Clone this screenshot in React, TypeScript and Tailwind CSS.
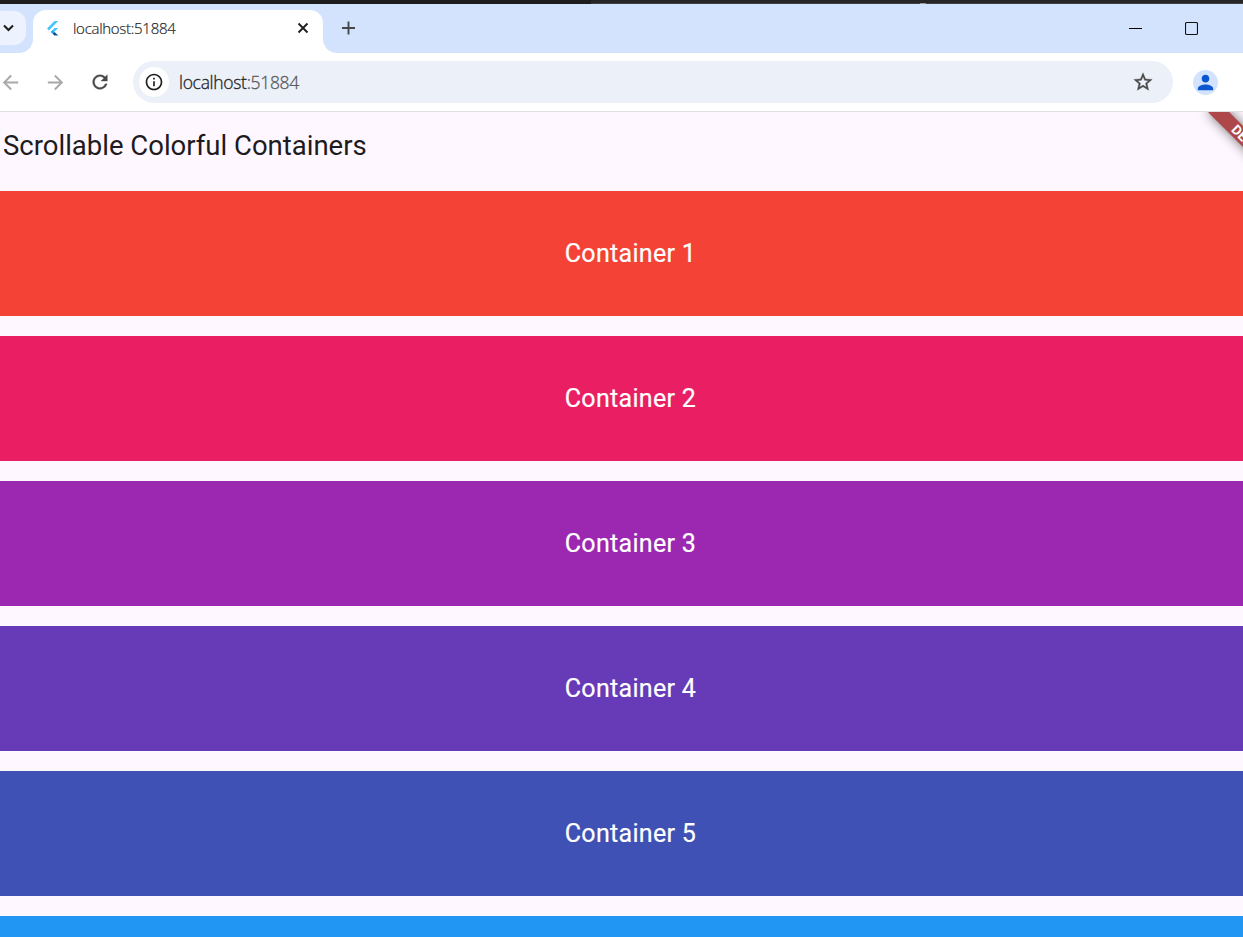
import React from "react";
import { MdArrowBack, MdArrowForward, MdInfoOutline, MdPerson } from "react-icons/md";

const containers = [
  { label: "Container 1", color: "bg-[#f44336]" },
  { label: "Container 2", color: "bg-[#e91e63]" },
  { label: "Container 3", color: "bg-[#9c27b0]" },
  { label: "Container 4", color: "bg-[#673ab7]" },
  { label: "Container 5", color: "bg-[#3f51b5]" },
];

function FlutterLogo() {
  return (
    <svg width="12" height="15" viewBox="0 0 12 15" className="shrink-0">
      <path d="M0 7.5 7.5 0H11.2L1.9 9.4z" fill="#47c5fb" />
      <path d="M7.5 7H11.2L7.4 10.8 5.6 9z" fill="#47c5fb" />
      <path d="M3.7 10.9 5.6 9 7.5 10.9 5.6 12.8z" fill="#12a9f3" />
      <path d="M5.6 12.8 7.5 10.9 11.2 14.6H7.4z" fill="#0a4f9c" />
    </svg>
  );
}

function TabStrip() {
  return (
    <div className="flex h-[49px] shrink-0 bg-[#d3e3fd]">
      <div className="h-[49px] w-[33px] shrink-0 bg-white">
        <div className="h-[49px] rounded-br-[14px] bg-[#d3e3fd] pt-[7px]">
          <button className="flex h-[34px] w-[26px] items-center rounded-r-[12px] bg-[#ecf2fe] pl-[3px]" aria-label="Search tabs">
            <svg width="12" height="12" viewBox="0 0 12 12" fill="none" stroke="#1f1f1f" strokeWidth="2.1">
              <path d="M1 3.5 5.5 8 10 3.5" />
            </svg>
          </button>
        </div>
      </div>
      <div className="flex h-[49px] w-[290px] shrink-0 bg-[#d3e3fd] pt-[6px]">
        <div className="flex h-[43px] w-full items-center rounded-t-[13px] bg-white pl-[14px] pr-[14px] pb-[7px]">
          <FlutterLogo />
          <span className="ml-[14px] flex-1 whitespace-nowrap font-['Open_Sans','Noto_Sans',sans-serif] text-[15px] leading-[20px] font-light tracking-[-0.28px] text-[#1f1f1f] [-webkit-text-stroke:0.2px]">
            localhost:51884
          </span>
          <svg width="12" height="12" viewBox="0 0 12 12" stroke="#1f1f1f" strokeWidth="1.9">
            <path d="M1.5 1.5 10.5 10.5M10.5 1.5 1.5 10.5" />
          </svg>
        </div>
      </div>
      <div className="flex flex-1 bg-white">
        <div className="flex flex-1 items-start rounded-bl-[14px] bg-[#d3e3fd] pl-[19px] pt-[17px]">
          <svg width="14" height="14" viewBox="0 0 14 14" stroke="#474747" strokeWidth="1.9">
            <path d="M6.5 .5V13.5M0 7H13" />
          </svg>
          <div className="ml-auto mr-[45px] flex gap-[43px]">
            <svg width="13" height="15" viewBox="0 0 13 15" shapeRendering="crispEdges">
              <path d="M0 7.5H13" stroke="#000" />
            </svg>
            <svg width="13" height="15" viewBox="0 0 13 15" fill="none" stroke="#111">
              <rect x=".5" y="1.5" width="12" height="12" rx="1.3" strokeWidth="1.15" />
            </svg>
          </div>
        </div>
      </div>
    </div>
  );
}

function Toolbar() {
  return (
    <div className="flex h-[59px] shrink-0 items-center border-b border-[#dfdfe1] bg-white">
      <MdArrowBack className="-ml-px size-[23px] shrink-0 text-[#a8a8a8]" />
      <MdArrowForward className="ml-[22px] size-[23px] shrink-0 text-[#a8a8a8]" />
      <svg width="22" height="22" viewBox="0 0 24 24" className="ml-[22px] shrink-0 fill-[#474747] stroke-[#474747] stroke-[0.35]">
        <path d="M17.65 6.35C16.2 4.9 14.21 4 12 4c-4.42 0-7.99 3.58-7.99 8s3.57 8 7.99 8c3.73 0 6.84-2.55 7.73-6h-2.08c-.82 2.33-3.04 4-5.65 4-3.31 0-6-2.69-6-6s2.69-6 6-6c1.66 0 3.14.69 4.22 1.78L13 11h7V4l-2.35 2.35z" />
      </svg>
      <div className="ml-[22px] flex h-[42px] w-[1040px] shrink-0 items-center rounded-full bg-[#ecf0f9] pl-[6px] pr-[19px]">
        <div className="flex size-[30px] items-center justify-center rounded-full bg-white">
          <MdInfoOutline className="size-[20px] text-[#1f1f1f]" />
        </div>
        <span className="ml-[10px] flex-1 whitespace-nowrap font-['Open_Sans','Noto_Sans',sans-serif] text-[17.5px] leading-[24px] font-light tracking-[-0.3px] text-[#1f1f1f] [-webkit-text-stroke:0.3px]">
          localhost<span className="text-[#5a5a5c]">:51884</span>
        </span>
        <svg width="22" height="22" viewBox="0 0 24 24" className="shrink-0 fill-[#474747] stroke-[#474747] stroke-[0.4]">
          <path d="m22 9.24-7.19-.62L12 2 9.19 8.63 2 9.24l5.46 4.73L5.82 21 12 17.27 18.18 21l-1.63-7.03L22 9.24zM12 15.4l-3.76 2.27 1-4.28-3.32-2.88 4.38-.38L12 6.1l1.71 4.04 4.38.38-3.32 2.88 1 4.28L12 15.4z" />
        </svg>
      </div>
      <div className="ml-[20px] flex size-[25px] items-center justify-center rounded-full bg-[#d3e3fd]">
        <MdPerson className="-ml-px size-[23px] text-[#0b57d0]" />
      </div>
    </div>
  );
}

export default function App() {
  return (
    <div className="flex h-[937px] w-[1243px] flex-col overflow-hidden bg-[#fef7ff]">
      <div className="flex h-[4px] shrink-0 bg-[#1d1d1d]">
        <div className="ml-[591px] flex flex-1 border-b border-[#404040] bg-[#262626]">
          <div className="ml-[329px] mt-[3px] h-[1px] w-[6px] bg-[#999999]" />
        </div>
      </div>
      <TabStrip />
      <Toolbar />
      <main className="relative flex flex-1 flex-col overflow-hidden font-['Roboto',sans-serif]">
        <header className="flex h-[79px] shrink-0 items-start pl-[3px] pt-[16px]">
          <h1 className="text-[27.5px] leading-[35px] font-normal text-[#1d1b20]">
            Scrollable Colorful Containers
          </h1>
        </header>
        <div className="flex flex-col gap-[20px]">
          {containers.map((c) => (
            <section key={c.label} className={`${c.color} flex h-[125px] w-[1261px] items-center justify-center`}>
              <span className="text-[25px] leading-[36px] tracking-[0.3125px] text-white [-webkit-text-stroke:0.2px]">{c.label}</span>
            </section>
          ))}
          <section className="h-[125px] w-[1261px] bg-[#2196f3]" />
        </div>
        <div className="absolute left-[1199.4px] top-[22.5px] flex h-[15px] w-[100px] rotate-45 items-center justify-center bg-[#ad4749] text-[13.5px] leading-[15px] font-bold text-white shadow-[0_0_12px_rgba(0,0,0,0.55)]">
          DEBUG
        </div>
      </main>
    </div>
  );
}
